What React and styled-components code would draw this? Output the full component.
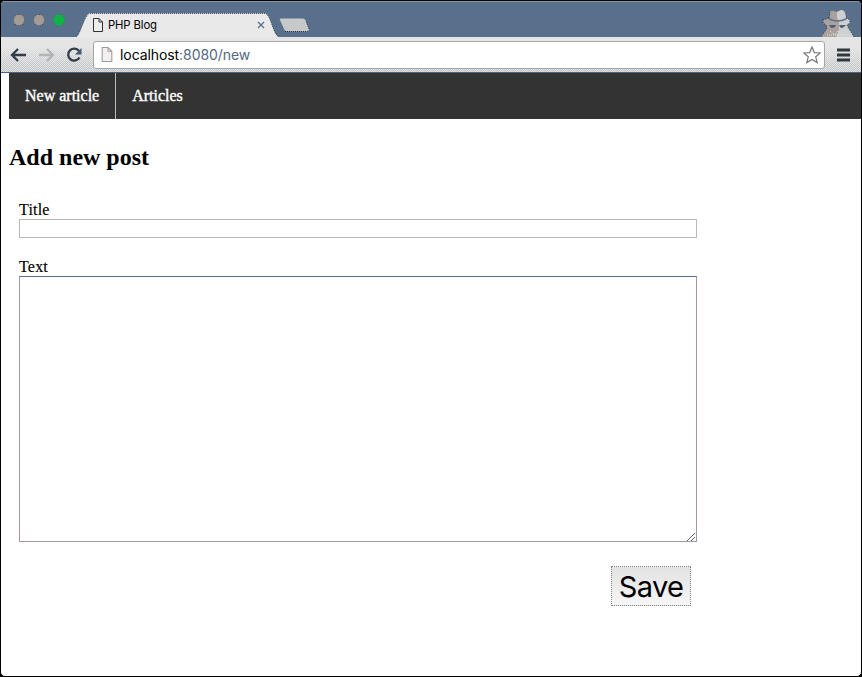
import React from 'react';
import styled, { createGlobalStyle } from 'styled-components';

const Global = createGlobalStyle`
  *, *::before, *::after { box-sizing: border-box; }
  body { margin: 0; background: #000; overflow: hidden; }
`;

const Window = styled.div`
  display: flex;
  flex-direction: column;
  width: 862px;
  height: 677px;
  border: 1px solid #000;
  border-radius: 5px;
  overflow: hidden;
  background: #fff;
`;

const TabStrip = styled.header`
  display: flex;
  flex: none;
  height: 36px;
  background: #59708c;
  border-top: 1px solid #8596a8;
`;

const WindowButtons = styled.div`
  display: flex;
  gap: 8px;
  width: 74px;
  padding: 12px 0 0 12px;
`;

const WindowButton = styled.span`
  width: 12px;
  height: 12px;
  border-radius: 50%;
  border: 1px dotted ${(p) => (p.$active ? '#128f48' : '#39434e')};
  background: ${(p) => (p.$active ? '#14b14b' : '#a39b96')};
`;

const Tab = styled.div`
  display: grid;
  width: 206px;
  height: 35px;
  > * { grid-area: 1 / 1; }
`;

const TabContent = styled.div`
  display: flex;
  align-items: center;
  padding: 12px 0 1px 18px;
  height: 35px;
`;

const TabTitle = styled.span`
  flex: 1;
  margin-left: 5px;
  font: 11.3px/14px Inter, sans-serif;
  letter-spacing: -0.12px;
  color: #000;
`;

const TabClose = styled.svg`
  margin-right: 16px;
`;

const NewTab = styled.svg`
  margin: 15px 0 0 -3px;
`;

const Incognito = styled.svg`
  margin: 8px 6px 0 auto;
`;

const Toolbar = styled.div`
  display: flex;
  align-items: center;
  flex: none;
  height: 36px;
  padding: 0 11px 0 9px;
  background:
    linear-gradient(#e5e5e5 25%, transparent 85%),
    repeating-conic-gradient(#bfc3c6 0 25%, #e5e5e5 0 50%) 0 0 / 2px 2px;
  border-bottom: 1px solid #4a6482;
`;

const NavIcons = styled.div`
  display: flex;
  gap: 11px;
  width: 83px;
`;

const AddressBar = styled.div`
  display: flex;
  align-items: center;
  width: 732px;
  height: 28px;
  padding: 0 3px 0 7px;
  border: 1px solid #a9a6a5;
  border-radius: 3px;
  background: #fff;
`;

const Url = styled.span`
  flex: 1;
  margin-left: 7px;
  font: 14px/18px Inter, sans-serif;
  letter-spacing: -0.08px;
  color: #53677f;
`;

const Host = styled.span`
  color: #000;
`;

const MenuIcon = styled.svg`
  margin-left: auto;
`;

const Page = styled.main`
  flex: 1;
  padding-left: 8px;
  font-family: "Liberation Serif", serif;
  font-size: 16px;
  color: #000;
`;

const Nav = styled.nav`
  display: flex;
  height: 46px;
  background: #333;
`;

const NavLink = styled.a`
  padding: 14px 16px;
  line-height: 18px;
  color: #fff;
  -webkit-text-stroke: 0.4px #fff;
  border-right: ${(p) => (p.$divided ? '1px solid #bbb' : '0')};
`;

const Heading = styled.h2`
  margin: 25px 0 0;
  font-size: 24px;
  line-height: 27px;
`;

const Form = styled.form`
  display: flex;
  flex-direction: column;
  width: 678px;
  margin: 30px 0 0 10px;
`;

const Label = styled.label`
  line-height: 18px;
  letter-spacing: 0.2px;
  -webkit-text-stroke: 0.15px #000;
`;

const TitleInput = styled.input`
  height: 19px;
  margin: 0 0 20px;
  border: 1px solid #b9b9b9;
  outline: 0;
`;

const TextField = styled.div`
  display: grid;
  > * { grid-area: 1 / 1; }
`;

const TextArea = styled.textarea`
  display: block;
  width: 678px;
  height: 266px;
  border: 1px solid #a39a98;
  border-top-color: #56718f;
  border-radius: 0;
  resize: none;
  outline: 0;
`;

const Grip = styled.svg`
  place-self: end;
  margin: 0 2px 1px 0;
  pointer-events: none;
`;

const SaveButton = styled.button`
  align-self: flex-end;
  width: 80px;
  height: 40px;
  margin: 24px 6px 0 0;
  padding: 1px 0 0;
  border: 1px dotted #8a8080;
  border-radius: 0;
  background: linear-gradient(#e2e2e2, #f6f6f6);
  font: 29px/36px Inter, sans-serif;
  letter-spacing: -0.6px;
  color: #000;
`;

const PageIcon = ({ width, height, stroke, fill }) => (
  <svg width={width} height={height} viewBox="0 0 10 14">
    <path d="M.5.5H6L9.5 4v9.5h-9zM6 .5V4h3.5" fill={fill} stroke={stroke} />
  </svg>
);

export default function App() {
  return (
    <>
      <Global />
      <Window>
        <TabStrip>
          <WindowButtons>
            <WindowButton /><WindowButton /><WindowButton $active />
          </WindowButtons>
          <Tab>
            <svg width="206" height="35">
              <path d="M1 35C5 34 9 14 14 11H190C196 12 198 33 204 35Z" fill="#e9e9e9" />
              <path d="M1 34.5C5 34 9 14 14 11.5H190C196 12 198 33 204 34.5" fill="none" stroke="#303c4b" strokeDasharray="1 1" />
            </svg>
            <TabContent>
              <PageIcon width="10" height="14" stroke="#333" fill="#eee" />
              <TabTitle>PHP Blog</TabTitle>
              <TabClose width="8" height="8">
                <path d="M1 1l6 6M7 1L1 7" stroke="#59708c" strokeWidth="1.3" />
              </TabClose>
            </TabContent>
          </Tab>
          <NewTab width="33" height="17">
            <path d="M3 1.5H25Q27 1.5 28 4L31 12Q32 14.5 29 14.5H9Q7 14.5 6 12L2 3Q1 1.5 3 1.5Z" fill="#c6c9ca" />
            <path d="M7 14.5H29Q32 14.5 31 12L28 4" fill="none" stroke="#26303c" strokeDasharray="1 1" />
          </NewTab>
          <Incognito width="34" height="27" viewBox="0 0 34 27">
            <path d="M8 8L9 2Q10 0 13 1L16 2L20 0Q23 0 24 3L25 8L29 10V13L26 15L28 19L32 25V27H1L2 24L6 18L5 15L2 13V10Z" fill="#aaa19d" />
            <path d="M16 2L20 0Q23 0 24 3L25 8L29 10V13L26 15L28 19L32 25V27H15L18 20V12L16 8Z" fill="#cdcfd0" />
            <path d="M8 9Q17 13 25 9" fill="none" stroke="#59708c" strokeWidth="1.5" />
            <path d="M8 15H15L14 17Q11 19 9 17ZM18 15H25L23 17Q20 19 19 17Z" fill="#4c6078" />
            <path d="M8 8L9 2M25 8L29 10V13L26 15L28 19L32 25M8 8L2 10V13L5 15L6 18L2 24" fill="none" stroke="#27313d" strokeDasharray="1.2 1.5" />
            <path d="M9 21L14 25L17 21L21 25L25 20M6 25H30" fill="none" stroke="#e6e6e6" strokeDasharray="1 1" />
          </Incognito>
        </TabStrip>
        <Toolbar>
          <NavIcons>
            <svg width="17" height="16"><path d="M16 8H2M8 2L2 8l6 6" fill="none" stroke="#333d47" strokeWidth="2.3" /></svg>
            <svg width="17" height="16"><path d="M1 8h14M9 2l6 6-6 6" fill="none" stroke="#b2b4b6" strokeWidth="2.3" /></svg>
            <svg width="17" height="16"><path d="M13.5 10.5A6 6 0 1 1 13 4" fill="none" stroke="#333d47" strokeWidth="2.3" /><path d="M15.5 1v6.5H9z" fill="#435872" /></svg>
          </NavIcons>
          <AddressBar>
            <PageIcon width="12" height="15" stroke="#a39b98" fill="#f0f0f0" />
            <Url><Host>localhost</Host>:8080/new</Url>
            <svg width="18" height="18"><path d="M9 1L11.3 6.6L17.2 7L12.7 10.8L14.2 16.6L9 13.4L3.8 16.6L5.3 10.8L.8 7L6.7 6.6Z" fill="#fff" stroke="#77797c" strokeWidth="1.2" /></svg>
          </AddressBar>
          <MenuIcon width="13" height="14"><path d="M0 2h13M0 7h13M0 12h13" stroke="#30383f" strokeWidth="2.8" /></MenuIcon>
        </Toolbar>
        <Page>
          <Nav>
            <NavLink $divided>New article</NavLink>
            <NavLink>Articles</NavLink>
          </Nav>
          <Heading>Add new post</Heading>
          <Form>
            <Label htmlFor="title">Title</Label>
            <TitleInput id="title" />
            <Label htmlFor="text">Text</Label>
            <TextField>
              <TextArea id="text" />
              <Grip width="8" height="8"><path d="M0 8L8 0M4 8l4-4" stroke="#59677a" /></Grip>
            </TextField>
            <SaveButton type="button">Save</SaveButton>
          </Form>
        </Page>
      </Window>
    </>
  );
}
